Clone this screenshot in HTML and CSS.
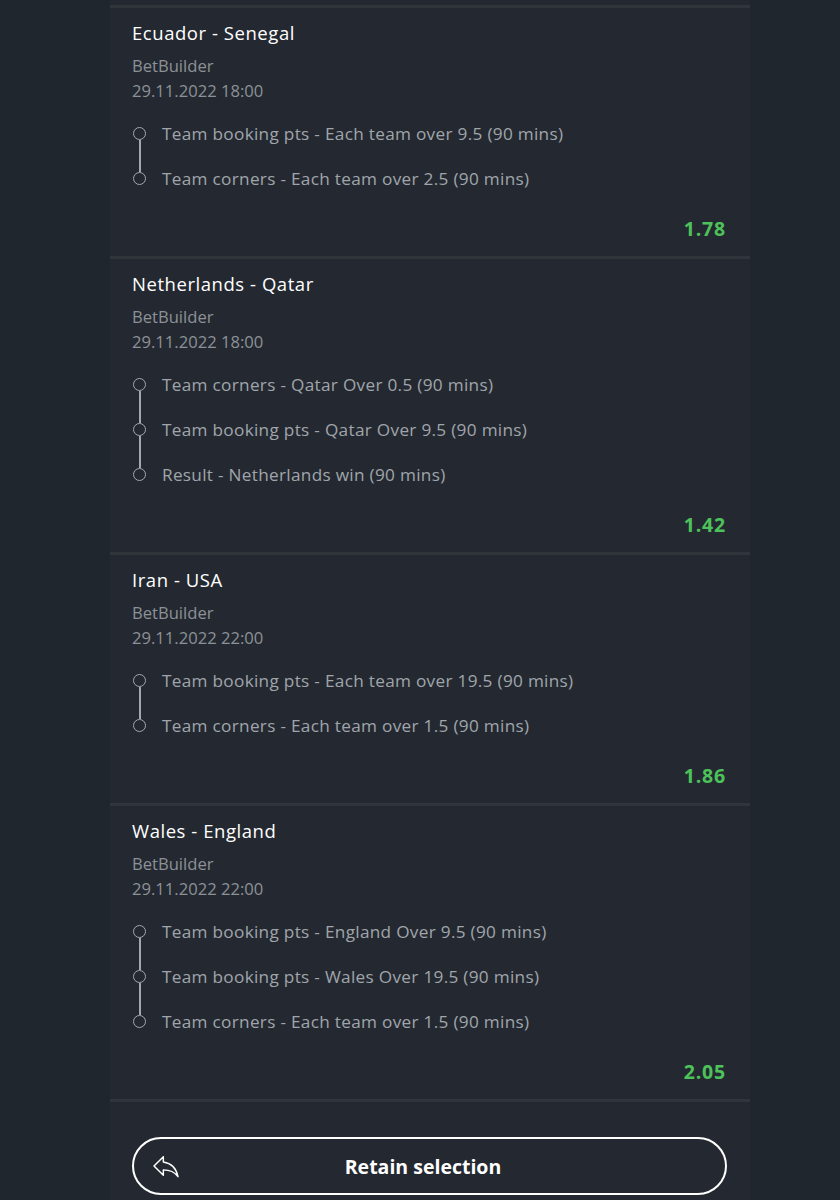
FILE: index.html
```html
<!DOCTYPE html>
<html lang="en">
<head>
<meta charset="utf-8">
<title>BetBuilder slip</title>
<link rel="stylesheet" href="styles.css">
</head>
<body>
<main class="slip">
  <section class="card">
    <h2 class="match">Ecuador - Senegal</h2>
    <div class="meta">BetBuilder</div>
    <div class="meta">29.11.2022 18:00</div>
    <ul class="legs">
      <li class="leg"><span class="dot"></span>Team booking pts - Each team over 9.5 (90 mins)</li>
      <li class="leg"><span class="dot"></span>Team corners - Each team over 2.5 (90 mins)</li>
    </ul>
    <div class="odds">1.78</div>
  </section>
  <section class="card">
    <h2 class="match">Netherlands - Qatar</h2>
    <div class="meta">BetBuilder</div>
    <div class="meta">29.11.2022 18:00</div>
    <ul class="legs">
      <li class="leg"><span class="dot"></span>Team corners - Qatar Over 0.5 (90 mins)</li>
      <li class="leg"><span class="dot"></span>Team booking pts - Qatar Over 9.5 (90 mins)</li>
      <li class="leg"><span class="dot"></span>Result - Netherlands win (90 mins)</li>
    </ul>
    <div class="odds">1.42</div>
  </section>
  <section class="card">
    <h2 class="match">Iran - USA</h2>
    <div class="meta">BetBuilder</div>
    <div class="meta">29.11.2022 22:00</div>
    <ul class="legs">
      <li class="leg"><span class="dot"></span>Team booking pts - Each team over 19.5 (90 mins)</li>
      <li class="leg"><span class="dot"></span>Team corners - Each team over 1.5 (90 mins)</li>
    </ul>
    <div class="odds">1.86</div>
  </section>
  <section class="card">
    <h2 class="match">Wales - England</h2>
    <div class="meta">BetBuilder</div>
    <div class="meta">29.11.2022 22:00</div>
    <ul class="legs">
      <li class="leg"><span class="dot"></span>Team booking pts - England Over 9.5 (90 mins)</li>
      <li class="leg"><span class="dot"></span>Team booking pts - Wales Over 19.5 (90 mins)</li>
      <li class="leg"><span class="dot"></span>Team corners - Each team over 1.5 (90 mins)</li>
    </ul>
    <div class="odds">2.05</div>
  </section>
  <div class="actions">
    <button class="retain" type="button">
      <svg class="retain-icon" width="32" height="32" viewBox="0 0 24 24" aria-hidden="true">
        <path d="M10 9V5l-7 7 7 7v-4.1c5 0 8.5 1.6 11 5.1-1-5-4-10-11-11z" fill="none" stroke="#ffffff" stroke-width="1.1" stroke-linejoin="round"/>
      </svg>
      <span>Retain selection</span>
    </button>
  </div>
</main>
</body>
</html>
```

FILE: styles.css
```css
html, body {
  margin: 0;
  padding: 0;
  background: #20262d;
}
body {
  font-family: "Open Sans", "Lato", sans-serif;
  color: #ffffff;
}
.slip {
  width: 640px;
  margin: 0 auto 0 110px;
  padding-top: 5px;
  background: #242931;
  min-height: 1195px;
}
.card {
  border-top: 3px solid #30353c;
  padding: 13px 24px 15px 22px;
}
.match {
  margin: 0;
  font-size: 18.5px;
  font-weight: 400;
  line-height: 24px;
  letter-spacing: 0.55px;
  color: #ffffff;
}
.meta {
  font-size: 16.6px;
  line-height: 25px;
  color: #8c9197;
}
.match + .meta {
  margin-top: 8px;
}
.legs {
  list-style: none;
  margin: 8px 0 0;
  padding: 0;
}
.leg {
  position: relative;
  display: flex;
  align-items: center;
  height: 45px;
  font-size: 17.2px;
  letter-spacing: 0.3px;
  color: #a0a5ab;
}
.dot {
  position: relative;
  flex: none;
  box-sizing: border-box;
  width: 13px;
  height: 13px;
  margin: 0 16px 0 1px;
  border: 1.6px solid #a3a8ae;
  border-radius: 50%;
  background: #242931;
  z-index: 1;
}
.leg + .leg::before {
  content: "";
  position: absolute;
  left: 7px;
  top: -16px;
  width: 1.6px;
  height: 32px;
  background: #a3a8ae;
}
.odds {
  margin-top: 16px;
  text-align: right;
  font-size: 19.5px;
  font-weight: 700;
  line-height: 24px;
  letter-spacing: 0.8px;
  color: #4ec25a;
}
.actions {
  border-top: 3px solid #30353c;
  padding: 35px 23px 4px 22px;
}
.retain {
  position: relative;
  display: flex;
  align-items: center;
  justify-content: center;
  width: 100%;
  height: 58px;
  box-sizing: border-box;
  padding: 0 13px 0 0;
  border: 2px solid #ffffff;
  border-radius: 29px;
  background: transparent;
  color: #ffffff;
  font-family: "Open Sans", "Lato", sans-serif;
  font-size: 19.5px;
  font-weight: 700;
  cursor: pointer;
}
.retain-icon {
  position: absolute;
  left: 16px;
  top: 11px;
}
```
